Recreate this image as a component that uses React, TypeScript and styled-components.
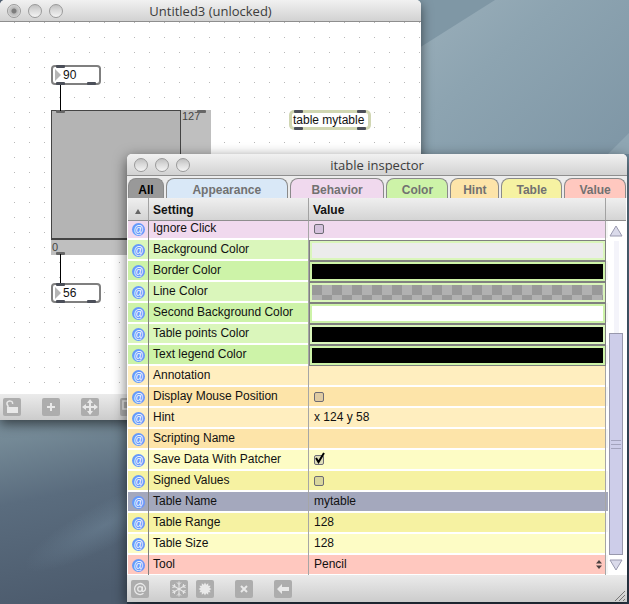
import React from 'react';
import styled, { createGlobalStyle, css } from 'styled-components';

const GlobalStyle = createGlobalStyle`
  * { box-sizing: border-box; }
  html, body { margin: 0; height: 100%; }
  body {
    font-family: "Liberation Sans", Arial, Helvetica, sans-serif;
    font-size: 12px;
    line-height: 16px;
    color: #111;
  }
  button, input, select { font: inherit; color: inherit; margin: 0; }
`;

/* ---------- desktop ---------- */

const Desktop = styled.main`
  position: relative;
  min-height: 100vh;
  overflow: hidden;
  background: #566679;
`;

const Backdrop = styled.svg`
  position: absolute;
  inset: 0;
  width: 100%;
  height: 100%;
`;

const Wallpaper = () => (
  <Backdrop viewBox="0 0 629 604" preserveAspectRatio="none" aria-hidden="true">
    <defs>
      <linearGradient id="sky" x1="0" y1="0" x2="1" y2="1">
        <stop offset="0" stopColor="#9cb0bb" />
        <stop offset="0.35" stopColor="#8da4b1" />
        <stop offset="1" stopColor="#7b93a3" />
      </linearGradient>
      <linearGradient id="side" x1="0" y1="0" x2="0" y2="1">
        <stop offset="0" stopColor="#6f8a9c" />
        <stop offset="0.5" stopColor="#46607a" />
        <stop offset="1" stopColor="#2f3d50" />
      </linearGradient>
      <linearGradient id="deep" x1="0" y1="0" x2="0.2" y2="1">
        <stop offset="0" stopColor="#7a8f9b" />
        <stop offset="0.2" stopColor="#748996" />
        <stop offset="0.5" stopColor="#5a6c7e" />
        <stop offset="1" stopColor="#4d5c6e" />
      </linearGradient>
      <radialGradient id="glow">
        <stop offset="0" stopColor="#70879a" stopOpacity="0.5" />
        <stop offset="1" stopColor="#70879a" stopOpacity="0" />
      </radialGradient>
    </defs>
    <rect x="400" width="229" height="200" fill="url(#sky)" />
    <path d="M400 0H495L400 60Z" fill="#7f97a5" />
    <path d="M608 154L629 133V170H600Z" fill="#8fa6b3" />
    <rect x="600" y="154" width="29" height="450" fill="url(#side)" />
    <rect y="400" width="200" height="204" fill="url(#deep)" />
    <ellipse cx="105" cy="525" rx="90" ry="22" fill="url(#glow)" transform="rotate(-28 105 525)" />
    <rect x="127" y="598" width="502" height="6" fill="#2f3f50" />
  </Backdrop>
);

/* ---------- window chrome ---------- */

const WindowFrame = styled.section`
  position: absolute;
  display: flex;
  flex-direction: column;
  overflow: hidden;
  border-radius: 5px 5px 0 0;
`;

const PatcherWindow = styled(WindowFrame)`
  top: 0;
  left: 0;
  right: 208px;
  background: #fff;
  box-shadow: 0 4px 12px rgba(0, 0, 0, 0.55);
`;

const InspectorWindow = styled(WindowFrame)`
  top: 154px;
  left: 127px;
  right: 2px;
  background: #fff;
  box-shadow: 0 4px 14px rgba(0, 0, 0, 0.6);
`;

const TitleBar = styled.header`
  display: grid;
  grid-template-columns: 1fr auto 1fr;
  align-items: center;
  height: 22px;
  flex: none;
  padding: 0 7px;
  border-bottom: 1px solid #8e8e8e;
  background: linear-gradient(#f1f1f1, #d2d2d2);
`;

const Title = styled.h1`
  margin: 0;
  font: 400 13px/20px "Open Sans", "Noto Sans", sans-serif;
  color: #3c3c3c;
`;

const Lights = styled.div`
  display: flex;
  gap: 7px;
`;

const Light = styled.button<{ $dirty?: boolean }>`
  width: 14px;
  height: 14px;
  padding: 0;
  border: 1px solid #9a9a9a;
  border-radius: 50%;
  background: ${({ $dirty }) =>
    $dirty
      ? 'radial-gradient(circle, #7c7c7c 0 2px, #b9b9b9 3px, #c8c8c8 5px, #dedede 6px)'
      : 'linear-gradient(#c0c0c0, #dadada 45%, #f4f4f4)'};
`;

const WindowTitle = ({ title, dirty }: { title: string; dirty?: boolean }) => (
  <TitleBar>
    <Lights>
      <Light aria-label="Close" $dirty={dirty} />
      <Light aria-label="Minimize" />
      <Light aria-label="Zoom" />
    </Lights>
    <Title>{title}</Title>
  </TitleBar>
);

const Toolbar = styled.footer`
  display: flex;
  align-items: center;
  flex: none;
  background: linear-gradient(#ebebeb, #cccccc);
`;

const PatcherToolbar = styled(Toolbar)`
  height: 26px;
  gap: 21px;
  padding: 0 3px;
`;

const InspectorToolbar = styled(Toolbar)`
  height: 27px;
  gap: 21px;
  padding: 0 1px 0 4px;
`;

const ToolGroup = styled.div`
  display: flex;
  gap: 8px;
`;

const ToolButton = styled.button`
  display: flex;
  width: 18px;
  height: 18px;
  padding: 0;
  border: 0;
  border-radius: 2px;
  background: #adadad;
  color: #e9e9e9;
`;

const ResizeGrip = styled.svg`
  align-self: flex-end;
  margin-left: auto;
`;

const Tool = ({ label, children }: { label: string; children: React.ReactNode }) => (
  <ToolButton aria-label={label}>
    <svg width="18" height="18" viewBox="0 0 18 18" fill="none" stroke="currentColor" strokeWidth="2">
      {children}
    </svg>
  </ToolButton>
);

/* ---------- patcher canvas ---------- */

const Canvas = styled.div`
  position: relative;
  height: 372px;
  background-image: linear-gradient(to right, #fff 14px, transparent 14px),
    linear-gradient(to bottom, #b8b8b8 1px, #fff 1px);
  background-size: 15px 15px;
`;

const Node = styled.div<{ $x: number; $y: number }>`
  position: absolute;
  left: ${({ $x }) => $x}px;
  top: ${({ $y }) => $y}px;
`;

const Cord = styled(Node)<{ $length: number }>`
  width: 1px;
  height: ${({ $length }) => $length}px;
  background: #000;
`;

const Port = styled.i<{ $x: number; $edge: 'top' | 'bottom'; $dim?: boolean }>`
  position: absolute;
  left: ${({ $x }) => $x}px;
  ${({ $edge }) => $edge}: 0;
  width: 9px;
  height: 3px;
  border-radius: 1px;
  background: ${({ $dim }) => ($dim ? '#666' : '#4b4f59')};
`;

const NumberNode = styled(Node)`
  display: flex;
  align-items: center;
  gap: 2px;
  width: 50px;
  height: 20px;
  padding-left: 4px;
  border-radius: 4px;
  background: #fff;
  box-shadow: inset 0 0 0 2px #7f7f7f;
`;

const NumberField = styled.input`
  width: 32px;
  padding: 0;
  border: 0;
  background: none;
  line-height: 16px;
`;

const ObjectNode = styled(Node)`
  height: 20px;
  width: 82px;
  padding: 2px 4px;
  border-radius: 5px;
  background: #fff;
  box-shadow: inset 0 0 0 3px #d0d6b2;
  white-space: nowrap;
`;

const TableNode = styled(Node)`
  width: 160px;
  height: 145px;
  background: #bfbfbf;
  color: #444;
  font-size: 11px;
  line-height: 13px;
  display: grid;
  grid-template: 130px 15px / 130px 30px;
`;

const Plot = styled.div`
  border: 1px solid #444;
  border-bottom-width: 2px;
  background: #b4b4b4;
`;

const Legend = styled.span<{ $pad?: boolean }>`
  padding: ${({ $pad }) => ($pad ? '1px 0 0 1px' : '0 0 0 1px')};
`;

const NumberBox = ({ x, y, value, label }: { x: number; y: number; value: string; label: string }) => (
  <NumberNode $x={x} $y={y}>
    <svg width="6" height="12" viewBox="0 0 6 12" aria-hidden="true">
      <path d="M0 0L6 6L0 12Z" fill="#b5b5b5" />
    </svg>
    <NumberField aria-label={label} defaultValue={value} />
    <Port $x={5} $edge="top" />
    <Port $x={5} $edge="bottom" />
    <Port $x={36} $edge="bottom" />
  </NumberNode>
);

/* ---------- inspector ---------- */

const Tabs = styled.nav`
  display: flex;
  gap: 2px;
  height: 22px;
  padding: 2px 1px 0;
  background: #ececec;
`;

const Tab = styled.button<{ $grow: number; $tint: string; $active?: boolean }>`
  flex: ${({ $grow }) => $grow} 1 0;
  min-width: 0;
  padding: 2px 0 0;
  border: 1px solid #8a8a8a;
  border-bottom: 0;
  border-radius: 8px 8px 0 0;
  background: ${({ $tint }) => $tint};
  color: ${({ $active }) => ($active ? '#000' : '#717171')};
  font-weight: 700;
  line-height: 16px;
  text-align: center;
`;

const Body = styled.div`
  display: flex;
  padding: 0 1px;
`;

const Grid = styled.table`
  flex: 1;
  min-width: 0;
  border-spacing: 0;
  table-layout: fixed;
`;

const headerSurface = css`
  height: 23px;
  border-bottom: 1px solid #8e8e8e;
  background: linear-gradient(#efefef, #d4d4d4);
`;

const Head = styled.th`
  ${headerSurface}
  padding: 2px 0 0 4px;
  border-right: 1px solid #a2a2a2;
  text-align: left;
`;

const SortHead = styled(Head)`
  padding: 2px 0 0;
  text-align: center;
  line-height: 8px;
`;

const HeadEnd = styled.td`
  ${headerSurface}
  padding: 0;
`;

const Col = styled.col<{ $w?: number }>`
  width: ${({ $w }) => ($w ? `${$w}px` : 'auto')};
`;

const Cell = styled.td<{ $line?: string }>`
  padding: 0;
  border-right: ${({ $line }) => ($line ? `1px solid ${$line}` : '0')};
`;

const NameCell = styled.th`
  padding: 0;
  border-right: 1px solid rgba(0, 0, 0, 0.35);
  font-weight: 400;
  text-align: left;
`;

const Fill = styled.div<{ $tint: string; $cut?: boolean; $pad?: number; $last?: boolean }>`
  display: flex;
  align-items: ${({ $cut }) => ($cut ? 'flex-end' : 'flex-start')};
  height: ${({ $cut }) => ($cut ? 17 : 19)}px;
  margin-bottom: ${({ $last }) => ($last ? 1 : 2)}px;
  padding: ${({ $cut, $pad = 0 }) => ($cut ? `0 0 2px ${$pad}px` : `1px 0 0 ${$pad}px`)};
  background: ${({ $tint }) => $tint};
  white-space: nowrap;
`;

const IconFill = styled(Fill)`
  align-items: flex-end;
  padding: 0 0 2px 4px;
`;

const Badge = styled.span`
  display: flex;
  align-items: center;
  justify-content: center;
  width: 13px;
  height: 13px;
  border-radius: 50%;
  background: #6699fb;
  color: #fff;
  font-size: 10px;
  line-height: 12px;
`;

const Well = styled.button<{ $tint: string }>`
  display: block;
  width: 100%;
  height: 21px;
  margin-top: -1px;
  padding: 2px;
  border: solid #808080;
  border-width: 1px 0 1px 1px;
  background: ${({ $tint }) => $tint};
`;

const Swatch = styled.span<{ $paint: string }>`
  display: block;
  height: 15px;
  background: ${({ $paint }) => $paint};
`;

const CheckWrap = styled.span`
  position: relative;
  display: flex;
  align-items: flex-end;
  flex: none;
  height: 14px;
  margin-bottom: 2px;
`;

const Check = styled.input`
  appearance: none;
  width: 10px;
  height: 10px;
  border: 1px solid #6d6b74;
  border-radius: 2px;
  background: rgba(70, 70, 130, 0.16);
`;

const Tick = styled.svg`
  position: absolute;
  left: 0;
  bottom: 0;
  pointer-events: none;
`;

const TextField = styled.input`
  width: 100%;
  height: 16px;
  padding: 0;
  border: 0;
  outline: 0;
  background: none;
`;

const Picker = styled.select`
  appearance: none;
  flex: 1;
  height: 16px;
  padding: 0;
  border: 0;
  background: none;
`;

const Arrows = styled.svg`
  flex: none;
  margin: 4px 3px 0 0;
`;

const ScrollColumn = styled.div`
  display: flex;
  flex-direction: column;
  width: 18px;
  flex: none;
`;

const ScrollCap = styled.div`
  ${headerSurface}
`;

const ScrollButton = styled.button`
  display: flex;
  align-items: center;
  height: 20px;
  padding: 0 0 0 1px;
  border: 0;
  background: none;
`;

const Track = styled.div`
  flex: 1;
  display: flex;
  flex-direction: column;
  width: 16px;
  padding-left: 1px;
  background: linear-gradient(#f4f4fa, #f4f4fa) 6px 0 / 5px 100% no-repeat;
`;

const TrackSpace = styled.div`
  flex: 93;
`;

const Thumb = styled.div`
  flex: 221;
  display: flex;
  align-items: center;
  justify-content: center;
  width: 14px;
  border: 1px solid #9898ac;
  background: #cdcde9;
`;

const C = {
  purple: '#f0d9ee',
  greenLight: '#daf6bb',
  green: '#cdf3a8',
  orangeLight: '#ffeebf',
  orange: '#fde4a9',
  yellowLight: '#fdfcc5',
  yellow: '#f6f2a2',
  selected: '#a4a8bd',
  pink: '#ffc8bf',
};

const CHECKER = 'repeating-conic-gradient(#b1b1b1 0 25%, #999 0 50%) 0 0 / 20px 20px';

type Kind = 'check' | 'color' | 'text' | 'select';
type Setting = { name: string; tint: string; kind: Kind; value?: string; on?: boolean };

const SETTINGS: Setting[] = [
  { name: 'Ignore Click', tint: C.purple, kind: 'check' },
  { name: 'Background Color', tint: C.greenLight, kind: 'color', value: '#ececec' },
  { name: 'Border Color', tint: C.green, kind: 'color', value: '#000' },
  { name: 'Line Color', tint: C.greenLight, kind: 'color', value: CHECKER },
  { name: 'Second Background Color', tint: C.green, kind: 'color', value: '#fff' },
  { name: 'Table points Color', tint: C.greenLight, kind: 'color', value: '#000' },
  { name: 'Text legend Color', tint: C.green, kind: 'color', value: '#000' },
  { name: 'Annotation', tint: C.orangeLight, kind: 'text', value: '' },
  { name: 'Display Mouse Position', tint: C.orange, kind: 'check' },
  { name: 'Hint', tint: C.orangeLight, kind: 'text', value: 'x 124 y 58' },
  { name: 'Scripting Name', tint: C.orange, kind: 'text', value: '' },
  { name: 'Save Data With Patcher', tint: C.yellowLight, kind: 'check', on: true },
  { name: 'Signed Values', tint: C.yellow, kind: 'check' },
  { name: 'Table Name', tint: C.selected, kind: 'text', value: 'mytable' },
  { name: 'Table Range', tint: C.yellow, kind: 'text', value: '128' },
  { name: 'Table Size', tint: C.yellowLight, kind: 'text', value: '128' },
  { name: 'Tool', tint: C.pink, kind: 'select', value: 'Pencil' },
];

const TABS = [
  { name: 'All', grow: 34, tint: '#999', active: true },
  { name: 'Appearance', grow: 120, tint: '#d9e8f7' },
  { name: 'Behavior', grow: 93, tint: C.purple },
  { name: 'Color', grow: 60, tint: C.green },
  { name: 'Hint', grow: 47, tint: C.orange },
  { name: 'Table', grow: 59, tint: C.yellow },
  { name: 'Value', grow: 60, tint: C.pink },
];

const ValueControl = ({ s }: { s: Setting }) => {
  switch (s.kind) {
    case 'check':
      return (
        <CheckWrap>
          <Check type="checkbox" aria-label={s.name} defaultChecked={s.on} />
          {s.on && (
            <Tick width="12" height="13" viewBox="0 0 12 13" fill="none" stroke="#000" strokeWidth="2">
              <path d="M2 6L4.5 10L10 1" />
            </Tick>
          )}
        </CheckWrap>
      );
    case 'select':
      return (
        <>
          <Picker aria-label={s.name} defaultValue={s.value}>
            <option>{s.value}</option>
          </Picker>
          <Arrows width="6" height="9" viewBox="0 0 6 9" fill="#4a4040" aria-hidden="true">
            <path d="M0 3.5L3 0L6 3.5ZM0 5.5L3 9L6 5.5Z" />
          </Arrows>
        </>
      );
    default:
      return <TextField aria-label={s.name} defaultValue={s.value} />;
  }
};

const SettingRow = ({ s, index }: { s: Setting; index: number }) => {
  const cut = index === 0;
  const last = index === SETTINGS.length - 1;
  const edge = s.tint === C.selected ? C.selected : index % 2 === 0 ? '#f5f5f5' : '#fff';
  return (
    <tr>
      <Cell $line="#808080">
        <IconFill $tint={s.tint} $cut={cut} $last={last}>
          <Badge>@</Badge>
        </IconFill>
      </Cell>
      <NameCell scope="row">
        <Fill $tint={s.tint} $pad={4} $cut={cut} $last={last}>
          {s.name}
        </Fill>
      </NameCell>
      <Cell $line={s.kind === 'color' ? '#808080' : 'rgba(0, 0, 0, 0.35)'}>
        {s.kind === 'color' ? (
          <Well $tint={s.tint} aria-label={s.name}>
            <Swatch $paint={s.value || '#fff'} />
          </Well>
        ) : (
          <Fill $tint={s.tint} $pad={5} $cut={cut} $last={last}>
            <ValueControl s={s} />
          </Fill>
        )}
      </Cell>
      <Cell>
        <Fill $tint={edge} $cut={cut} $last={last} />
      </Cell>
    </tr>
  );
};

const ARMS = [0, 60, 120, 180, 240, 300];

const burst = Array.from({ length: 24 }, (_, i) => {
  const r = i % 2 ? 4.5 : 6.5;
  const a = (i * Math.PI) / 12;
  return `${(9 + r * Math.cos(a)).toFixed(2)},${(9 + r * Math.sin(a)).toFixed(2)}`;
}).join(' ');

const Patcher = () => (
  <PatcherWindow aria-label="Patcher">
    <WindowTitle title="Untitled3 (unlocked)" dirty />
    <Canvas>
      <TableNode $x={51} $y={88}>
        <Plot />
        <Legend>127</Legend>
        <Legend $pad>0</Legend>
        <Port $x={5} $edge="top" $dim />
        <Port $x={146} $edge="top" $dim />
        <Port $x={5} $edge="bottom" $dim />
      </TableNode>
      <Cord $x={60} $y={62} $length={27} />
      <Cord $x={60} $y={232} $length={30} />
      <NumberBox x={51} y={43} value="90" label="Table index" />
      <NumberBox x={51} y={261} value="56" label="Table value" />
      <ObjectNode $x={289} $y={88}>
        table mytable
        <Port $x={5} $edge="top" />
        <Port $x={68} $edge="top" />
        <Port $x={5} $edge="bottom" />
        <Port $x={68} $edge="bottom" />
      </ObjectNode>
    </Canvas>
    <PatcherToolbar>
      <Tool label="Unlock">
        <path d="M5 9.500V8C2.500 5 5 2.500 7.500 3C9.500 3.300 9.800 5 9.500 6" strokeWidth="1.5" />
        <path d="M4 9H15V15H4Z" fill="currentColor" stroke="none" />
      </Tool>
      <Tool label="New object">
        <path d="M9 5V13M5 9H13" />
      </Tool>
      <Tool label="Move">
        <path d="M9 3V15M3 9H15" />
        <path d="M9 1L12 5H6ZM9 17L12 13H6ZM1 9L5 6V12ZM17 9L13 6V12Z" fill="currentColor" stroke="none" />
      </Tool>
      <Tool label="Presentation">
        <path d="M3 3H15V11H8L3 11Z" strokeWidth="1.5" />
      </Tool>
    </PatcherToolbar>
  </PatcherWindow>
);

const Inspector = () => (
  <InspectorWindow aria-label="Inspector">
    <WindowTitle title="itable inspector" />
    <Tabs>
      {TABS.map((t) => (
        <Tab key={t.name} $grow={t.grow} $tint={t.tint} $active={t.active}>
          {t.name}
        </Tab>
      ))}
    </Tabs>
    <Body>
      <Grid>
        <colgroup>
          <Col $w={21} />
          <Col $w={160} />
          <Col />
          <Col $w={2} />
        </colgroup>
        <thead>
          <tr>
            <SortHead aria-label="Sort">
              <svg width="6" height="5" viewBox="0 0 6 5">
                <path d="M3 0L6 5H0Z" fill="#666" />
              </svg>
            </SortHead>
            <Head>Setting</Head>
            <Head>Value</Head>
            <HeadEnd />
          </tr>
        </thead>
        <tbody>
          {SETTINGS.map((s, i) => (
            <SettingRow key={s.name} s={s} index={i} />
          ))}
        </tbody>
      </Grid>
      <ScrollColumn>
        <ScrollCap />
        <ScrollButton aria-label="Scroll up">
          <svg width="14" height="12" viewBox="0 0 14 12">
            <path d="M7 1L13 11H1Z" fill="#dadaea" stroke="#9a9ab0" />
          </svg>
        </ScrollButton>
        <Track>
          <TrackSpace />
          <Thumb>
            <svg width="10" height="9" viewBox="0 0 10 9" stroke="#a3a3bd">
              <path d="M0 0.5H10M0 4.500H10M0 8.500H10" />
            </svg>
          </Thumb>
        </Track>
        <ScrollButton aria-label="Scroll down">
          <svg width="14" height="12" viewBox="0 0 14 12">
            <path d="M7 11L13 1H1Z" fill="#dadaea" stroke="#9a9ab0" />
          </svg>
        </ScrollButton>
      </ScrollColumn>
    </Body>
    <InspectorToolbar>
      <Tool label="Attributes">
        <circle cx="9" cy="9" r="2.300" strokeWidth="1.3" />
        <path d="M11.500 6.500L11 10.500C11.300 12.300 14.500 11.200 14.500 8.500A5.500 5.500 0 1 0 12.500 13.300" strokeWidth="1.3" />
      </Tool>
      <ToolGroup>
        <Tool label="Freeze">
          {ARMS.map((a) => (
            <path key={a} d="M9 9V1.500M7 2.500L9 4.500L11 2.500" strokeWidth="1" transform={`rotate(${a} 9 9)`} />
          ))}
        </Tool>
        <Tool label="Unfreeze">
          <polygon points={burst} fill="currentColor" stroke="none" />
        </Tool>
      </ToolGroup>
      <Tool label="Clear">
        <path d="M6 6L12 12M12 6L6 12" />
      </Tool>
      <Tool label="Revert">
        <path d="M3 9L8 4V7H15V11H8V14Z" fill="currentColor" stroke="none" />
      </Tool>
      <ResizeGrip width="12" height="12" viewBox="0 0 12 12" stroke="#777" aria-hidden="true">
        <path d="M1 11L11 1M5 11L11 5M9 11L11 9" />
      </ResizeGrip>
    </InspectorToolbar>
  </InspectorWindow>
);

export default function App() {
  return (
    <>
      <GlobalStyle />
      <Desktop>
        <Wallpaper />
        <Patcher />
        <Inspector />
      </Desktop>
    </>
  );
}
